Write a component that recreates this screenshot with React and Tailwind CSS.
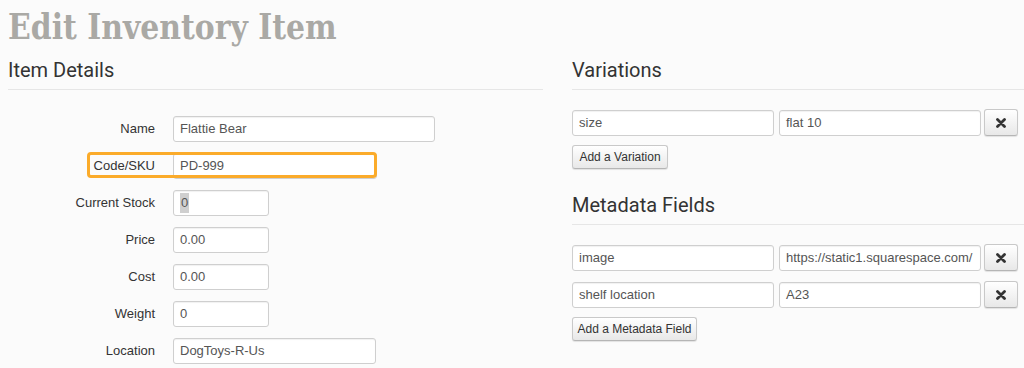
import React from "react";

const inputCls =
  "flex items-center h-[26px] rounded-[3px] border border-[#cfcfcf] bg-white px-[6px] text-[13px] text-[#555] shadow-[inset_0_1px_1px_rgba(0,0,0,0.06)] whitespace-nowrap overflow-hidden";

function Field({ label, width, children }) {
  return (
    <div className="flex items-center h-[26px]">
      <div className="w-[147px] text-right text-[13px] text-[#333]">{label}</div>
      <div className={`ml-[18px] ${width} ${inputCls}`}>{children}</div>
    </div>
  );
}

function XIcon() {
  return (
    <svg width="10" height="10" viewBox="0 0 10 10">
      <path d="M1.5 1.5 L8.5 8.5 M8.5 1.5 L1.5 8.5" stroke="#333" strokeWidth="2.8" strokeLinecap="round" />
    </svg>
  );
}

function Btn({ children, width }) {
  return (
    <div
      className={`flex items-center justify-center ${width} h-[24px] rounded-[3px] border border-[#c9c9c9] border-b-[#b5b5b5] bg-linear-to-b from-white to-[#e8e8e8] text-[12px] text-[#333] shadow-[0_1px_1px_rgba(0,0,0,0.1)]`}
    >
      {children}
    </div>
  );
}

function XBtn() {
  return (
    <div className="ml-[3px] flex items-center justify-center w-[34px] h-[27px] rounded-[3px] border border-[#c9c9c9] border-b-[#b5b5b5] bg-linear-to-b from-white to-[#e8e8e8] shadow-[0_1px_1px_rgba(0,0,0,0.1)]">
      <XIcon />
    </div>
  );
}

function PairRow({ a, b }) {
  return (
    <div className="flex items-center">
      <div className={`w-[202px] ${inputCls}`}>{a}</div>
      <div className={`ml-[5px] w-[202px] ${inputCls}`}>{b}</div>
      <XBtn />
    </div>
  );
}

function Heading({ children }) {
  return (
    <h2 className="font-['Roboto',sans-serif] text-[20px] leading-[24px] text-[#333] pb-[7px] border-b border-[#e6e6e6]">
      {children}
    </h2>
  );
}

export default function App() {
  return (
    <div className="w-[1024px] h-[368px] overflow-hidden bg-[#fbfbfb] pl-[8px] font-['Liberation_Sans',Arial,sans-serif]">
      <div className="h-[58px] pt-[6px]">
        <h1 className="origin-left scale-x-[0.83] font-['DejaVu_Serif',serif] font-bold text-[36px] leading-[40px] text-[#aaa9a5] whitespace-nowrap">
          Edit Inventory Item
        </h1>
      </div>
      <div className="flex">
        <div className="w-[535px]">
          <Heading>Item Details</Heading>
          <div className="mt-[26px] flex flex-col gap-[11px]">
            <Field label="Name" width="w-[262px]">Flattie Bear</Field>
            <div className="relative">
              <Field label="Code/SKU" width="w-[204px]">PD-999</Field>
              <div className="absolute left-[79px] top-[-1px] w-[290px] h-[26px] rounded-[4px] border-[3px] border-[#fbab2a]" />
            </div>
            <Field label="Current Stock" width="w-[96px]">
              <span className="bg-[#cfcfcf] px-[1px]">0</span>
            </Field>
            <Field label="Price" width="w-[96px]">0.00</Field>
            <Field label="Cost" width="w-[96px]">0.00</Field>
            <Field label="Weight" width="w-[96px]">0</Field>
            <Field label="Location" width="w-[203px]">DogToys-R-Us</Field>
          </div>
        </div>
        <div className="ml-[29px] flex-1">
          <Heading>Variations</Heading>
          <div className="mt-[19px]">
            <PairRow a="size" b="flat 10" />
          </div>
          <div className="mt-[9px]">
            <Btn width="w-[96px]">Add a Variation</Btn>
          </div>
          <div className="mt-[24px]">
            <Heading>Metadata Fields</Heading>
          </div>
          <div className="mt-[19px] flex flex-col gap-[10px]">
            <PairRow a="image" b="https://static1.squarespace.com/" />
            <PairRow a="shelf location" b="A23" />
          </div>
          <div className="mt-[9px]">
            <Btn width="w-[125px]">Add a Metadata Field</Btn>
          </div>
        </div>
      </div>
    </div>
  );
}
